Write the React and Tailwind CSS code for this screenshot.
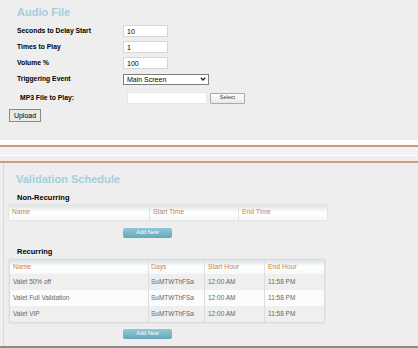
export default function App() {
  const hdr = "text-[#c8844f] text-[6.8px] leading-none";
  const cell = "text-[#666] text-[6.5px] leading-none";
  const addBtn = (
    <div className="w-[49px] h-[10px] rounded-[2px] bg-[linear-gradient(to_bottom,#93c8d5,#62a8bb)] flex items-center justify-center text-white text-[5.5px] leading-none">
      Add New
    </div>
  );
  return (
    <div className="w-[418px] h-[348px] bg-[#eeeeee] overflow-hidden flex flex-col [font-family:'Liberation_Sans',Arial,sans-serif] text-black">
      {/* Audio File section */}
      <div className="h-[140px] shrink-0 flex flex-col">
        <div className="pl-[17px] pt-[6px] h-[18px] text-[11px] leading-[12px] font-bold text-[#a3cedd]">Audio File</div>
        <div className="mt-[5px] flex flex-col">
          <div className="flex items-center h-[16px]">
            <div className="w-[123px] pl-[17px] text-[6.8px] font-bold leading-none">Seconds to Delay Start</div>
            <div className="w-[45px] h-[12px] bg-white border border-[#d6d6d6] text-[7px] leading-none flex items-center pl-[3px]">10</div>
          </div>
          <div className="flex items-center h-[16px]">
            <div className="w-[123px] pl-[17px] text-[6.8px] font-bold leading-none">Times to Play</div>
            <div className="w-[45px] h-[12px] bg-white border border-[#d6d6d6] text-[7px] leading-none flex items-center pl-[3px]">1</div>
          </div>
          <div className="flex items-center h-[16px]">
            <div className="w-[123px] pl-[17px] text-[6.8px] font-bold leading-none">Volume %</div>
            <div className="w-[45px] h-[12px] bg-white border border-[#d6d6d6] text-[7px] leading-none flex items-center pl-[3px]">100</div>
          </div>
          <div className="flex items-center h-[16px]">
            <div className="w-[123px] pl-[17px] text-[6.8px] font-bold leading-none">Triggering Event</div>
            <div className="w-[86px] h-[11px] bg-white border border-[#7d7d7d] text-[7px] leading-none flex items-center justify-between pl-[3px] pr-[2px]">
              <span>Main Screen</span>
              <svg width="6" height="4" viewBox="0 0 6 4"><path d="M0.8 0.8 L3 3 L5.2 0.8" fill="none" stroke="#222" strokeWidth="1.3" /></svg>
            </div>
          </div>
          <div className="flex items-center h-[16px] mt-[3px]">
            <div className="w-[127px] pl-[20px] text-[6.8px] font-bold leading-none">MP3 File to Play:</div>
            <div className="w-[80px] h-[12px] bg-white border border-[#e6e6e6]"></div>
            <div className="ml-[3px] w-[35px] h-[11px] rounded-[1px] border border-[#a9a9a9] bg-[linear-gradient(to_bottom,#ffffff,#e9e9e9)] flex items-center justify-center text-[5.5px] text-[#333] leading-none">Select</div>
          </div>
          <div className="mt-[3px] ml-[9px] w-[32px] h-[13px] border border-[#8a8a8a] bg-[#e9e9e9] flex items-center justify-center text-[7px] leading-none">Upload</div>
        </div>
      </div>

      {/* separator */}
      <div className="h-[5px] bg-white shrink-0"></div>
      <div className="h-[2px] bg-[#c99a77] shrink-0"></div>
      <div className="h-[9px] bg-[#f2f2f2] border-b border-white shrink-0"></div>
      <div className="h-[5px] shrink-0"></div>
      <div className="h-[2px] bg-[#cc9e7c] shrink-0"></div>

      {/* Validation Schedule */}
      <div className="h-[183px] shrink-0 ml-[3px] border-l border-[#dadada] flex flex-col">
        <div className="pl-[12px] pt-[10px] h-[22px] text-[11px] leading-[12px] font-bold text-[#a3cedd]">Validation Schedule</div>
        <div className="pl-[13px] mt-[8px] h-[9px] text-[7.5px] leading-[9px] font-bold">Non-Recurring</div>
        <div className="ml-[5px] mt-[3px] w-[318px] h-[15px] flex items-center bg-[linear-gradient(to_bottom,#dde3e7,#ffffff_50%,#f6f8f9)] shadow-[0_0_2px_rgba(0,0,0,0.12)]">
          <div className="w-[140px] h-full flex items-center pl-[3px]"><span className={hdr}>Name</span></div>
          <div className="w-[89px] h-full flex items-center pl-[3px] border-l border-[#dfe3e6]"><span className={hdr}>Start Time</span></div>
          <div className="flex-1 h-full flex items-center pl-[3px] border-l border-[#dfe3e6]"><span className={hdr}>End Time</span></div>
        </div>
        <div className="ml-[119px] mt-[8px]">{addBtn}</div>
        <div className="pl-[13px] mt-[9px] h-[9px] text-[7.5px] leading-[9px] font-bold">Recurring</div>
        <div className="ml-[5px] mt-[3px] w-[316px] flex flex-col border border-[#dcdcdc] shadow-[0_0_2px_rgba(0,0,0,0.1)]">
          <div className="h-[14px] flex bg-[linear-gradient(to_bottom,#dde3e7,#ffffff_50%,#f6f8f9)]">
            <div className="w-[138px] flex items-center pl-[3px]"><span className={hdr}>Name</span></div>
            <div className="w-[56px] flex items-center pl-[2px] border-l border-[#dfe3e6]"><span className={hdr}>Days</span></div>
            <div className="w-[60px] flex items-center pl-[3px] border-l border-[#dfe3e6]"><span className={hdr}>Start Hour</span></div>
            <div className="flex-1 flex items-center pl-[3px] border-l border-[#dfe3e6]"><span className={hdr}>End Hour</span></div>
          </div>
          {[
            ["Valet 50% off", "bg-[#efefef]"],
            ["Valet Full Validation", "bg-[#fbfbfb]"],
            ["Valet VIP", "bg-[#efefef]"],
          ].map(([n, bg]) => (
            <div key={n} className={"h-[16px] flex " + bg}>
              <div className="w-[138px] flex items-center pl-[3px]"><span className={cell}>{n}</span></div>
              <div className="w-[56px] flex items-center pl-[2px] border-l border-[#dcdcdc]"><span className={cell}>SuMTWThFSa</span></div>
              <div className="w-[60px] flex items-center pl-[3px] border-l border-[#dcdcdc]"><span className={cell}>12:00 AM</span></div>
              <div className="flex-1 flex items-center pl-[3px] border-l border-[#dcdcdc]"><span className={cell}>11:58 PM</span></div>
            </div>
          ))}
        </div>
        <div className="ml-[119px] mt-[6px]">{addBtn}</div>
      </div>
      <div className="h-[2px] bg-[#8c8c8c] shrink-0"></div>
    </div>
  );
}
